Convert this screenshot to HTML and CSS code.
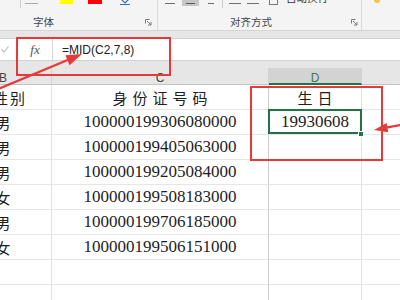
FILE: index.html
```html
<!DOCTYPE html>
<html lang="zh">
<head>
<meta charset="utf-8">
<title>MID</title>
<link rel="stylesheet" href="styles.css">
</head>
<body>
<div class="app">
  <div class="ribbon">
    <div class="group g-font">
      <div class="tools">
        <span class="vline t-a"></span>
        <span class="hline t-b"></span>
        <span class="swatch yellow"></span>
        <span class="swatch red"></span>
        <svg class="t-wen" width="10" height="6" viewBox="0 0 10 6"><path d="M1 0 L5 4 L9 0 M0 5.5 H10" stroke="#2f6fc2" stroke-width="1.2" fill="none"/></svg>
      </div>
      <div class="label-row">
        <span class="glabel l-font">字体</span>
        <svg class="launcher" width="7" height="7" viewBox="0 0 7 7"><path d="M0.5 4.5 V0.5 H4.5 M2 2 L6 6 M6 3 V6 H3" stroke="#7a7a7a" stroke-width="1" fill="none"/></svg>
      </div>
    </div>
    <div class="group g-align">
      <div class="tools">
        <span class="dash d1"></span>
        <span class="btn-on"><span class="dash in"></span></span>
        <span class="dash d2"></span>
        <span class="vline t-c"></span>
        <span class="dash d3"></span>
        <span class="dash d4"></span>
        <span class="chk"></span>
        <span class="wrap">自动换行</span>
      </div>
      <div class="label-row">
        <span class="glabel l-align">对齐方式</span>
        <svg class="launcher" width="7" height="7" viewBox="0 0 7 7"><path d="M0.5 4.5 V0.5 H4.5 M2 2 L6 6 M6 3 V6 H3" stroke="#7a7a7a" stroke-width="1" fill="none"/></svg>
      </div>
    </div>
    <div class="group g-more">
      <div class="tools"><span class="blob"></span></div>
    </div>
  </div>

  <div class="band"></div>

  <div class="fbar">
    <div class="fb-cancel">
      <svg width="8" height="7" viewBox="0 0 8 7"><path d="M0.5 3.5 L3 6 L7.5 0.5" stroke="#b9b9b9" stroke-width="1.1" fill="none"/></svg>
    </div>
    <div class="fb-fx">fx</div>
    <div class="fb-input">=MID(C2,7,8)</div>
  </div>

  <div class="sheet">
    <div class="grid">
      <div class="ch">B</div>
      <div class="ch">C</div>
      <div class="ch ch-sel">D</div>
      <div class="ch"></div>

      <div class="c cb cjk wide bhead">性别</div>
      <div class="c cc cjk wide">身份证号码</div>
      <div class="c cd cjk wide">生日</div>
      <div class="c ce"></div>

      <div class="c cb cjk">男</div>
      <div class="c cc num">100000199306080000</div>
      <div class="c cd num active">19930608</div>
      <div class="c ce"></div>

      <div class="c cb cjk">男</div>
      <div class="c cc num">100000199405063000</div>
      <div class="c cd"></div>
      <div class="c ce"></div>

      <div class="c cb cjk">男</div>
      <div class="c cc num">100000199205084000</div>
      <div class="c cd"></div>
      <div class="c ce"></div>

      <div class="c cb cjk">女</div>
      <div class="c cc num">100000199508183000</div>
      <div class="c cd"></div>
      <div class="c ce"></div>

      <div class="c cb cjk">男</div>
      <div class="c cc num">100000199706185000</div>
      <div class="c cd"></div>
      <div class="c ce"></div>

      <div class="c cb cjk">女</div>
      <div class="c cc num">100000199506151000</div>
      <div class="c cd"></div>
      <div class="c ce"></div>

      <div class="c cb"></div>
      <div class="c cc"></div>
      <div class="c cd"></div>
      <div class="c ce"></div>

      <div class="c cb"></div>
      <div class="c cc"></div>
      <div class="c cd"></div>
      <div class="c ce"></div>
    </div>
  </div>

  <div class="mark mark-formula"></div>
  <div class="mark mark-result"></div>
  <svg class="arrows" width="400" height="300" viewBox="0 0 400 300">
    <path d="M-3 89.5 L70 59" stroke="#e63a3a" stroke-width="2.2" fill="none"/>
    <polygon points="82,54 69.6,65.2 65.4,55.2" fill="#e63a3a"/>
    <path d="M386 127.6 L403 124.5" stroke="#e63a3a" stroke-width="2.2" fill="none"/>
    <polygon points="374,130 386.6,123 388.3,132.3" fill="#e63a3a"/>
  </svg>
</div>
</body>
</html>
```

FILE: styles.css
```css
html, body {
  margin: 0;
  padding: 0;
  background: #ffffff;
}

body {
  font-family: "Noto Sans CJK SC", "Noto Sans", sans-serif;
}

.app {
  position: relative;
  width: 400px;
  height: 300px;
  overflow: hidden;
  background: #ffffff;
}

/* ---------- ribbon ---------- */
.ribbon {
  display: flex;
  height: 31px;
  box-sizing: border-box;
  background: #f4f4f4;
  border-bottom: 1px solid #d6d6d6;
}

.group {
  display: flex;
  flex-direction: column;
  box-sizing: border-box;
  border-right: 1px solid #dadada;
}

.g-font { width: 158px; }
.g-align { width: 204px; }
.g-more { flex: 1; border-right: none; }

.tools {
  height: 14px;
  display: flex;
  align-items: flex-start;
}

.label-row {
  height: 16px;
  display: flex;
  align-items: center;
}

.glabel {
  font-size: 10.5px;
  line-height: 12px;
  color: #454545;
}

.l-font { margin-left: 33px; }
.l-align { margin-left: 72px; }

.launcher {
  margin-left: auto;
  margin-right: 5px;
  margin-top: 1px;
}

.g-align .launcher { margin-right: 3px; }

.vline {
  display: block;
  width: 1px;
  height: 8px;
  background: #cfcfcf;
}

.hline {
  display: block;
  height: 1px;
  background: #a9a9a9;
}

.t-a { margin-left: 20px; }
.t-b { margin-left: 4px; width: 13px; margin-top: 3px; }

.swatch {
  display: block;
  height: 4px;
}

.yellow { width: 13px; margin-left: 22px; background: #ffff00; }
.red { width: 14px; margin-left: 15px; background: #ff0000; }

.t-wen { margin-left: 18px; margin-top: -1px; }

.dash {
  display: block;
  height: 1px;
  background: #6f6f6f;
  margin-top: 3px;
}

.d1 { margin-left: 7px; width: 10px; }
.d2 { margin-left: 9px; width: 6px; }
.d3 { margin-left: 6px; width: 12px; }
.d4 { margin-left: 6px; width: 12px; }

.btn-on {
  display: flex;
  justify-content: center;
  width: 17px;
  height: 6px;
  margin-left: 7px;
  background: #c6c6c6;
}

.dash.in { width: 9px; margin-top: 3px; background: #5a5a5a; }

.t-c { margin-left: 8px; }

.chk {
  display: block;
  width: 7px;
  height: 4px;
  margin-left: 10px;
  border: 1px solid #7a7a7a;
  border-top: none;
}

.wrap {
  display: block;
  margin-left: 8px;
  margin-top: -8px;
  font-size: 10.5px;
  line-height: 12px;
  color: #333;
}

.blob {
  display: block;
  width: 6px;
  height: 6px;
  margin-left: 12px;
  margin-top: -3px;
  border-radius: 50%;
  background: #f3c246;
}

/* ---------- band & formula bar ---------- */
.band {
  height: 7px;
  background: #e6e6e6;
}

.fbar {
  display: flex;
  height: 23px;
  box-sizing: border-box;
  background: #ffffff;
  border-top: 1px solid #d2d2d2;
  border-bottom: 1px solid #d2d2d2;
}

.fb-cancel {
  width: 18px;
  box-sizing: border-box;
  border-right: 1px solid #d6d6d6;
  display: flex;
  align-items: center;
  padding-left: 1px;
}

.fb-fx {
  width: 35px;
  box-sizing: border-box;
  border-right: 1px solid #d6d6d6;
  display: flex;
  align-items: center;
  justify-content: center;
  font-family: "Liberation Serif", "DejaVu Serif", serif;
  font-style: italic;
  font-size: 13px;
  color: #555;
}

.fb-input {
  display: flex;
  align-items: center;
  padding-left: 9px;
  font-family: "Liberation Sans", sans-serif;
  font-size: 12px;
  color: #222;
}

/* ---------- sheet ---------- */
.sheet {
  background: #e6e6e6;
  padding-top: 7px;
  overflow: hidden;
}

.grid {
  display: grid;
  grid-template-columns: 97px 217px 93px 120px;
  margin-left: -45px;
  background: #ffffff;
}

.ch {
  height: 17px;
  box-sizing: border-box;
  padding-top: 4px;
  display: flex;
  align-items: center;
  justify-content: center;
  background: #e6e6e6;
  border-right: 1px solid #d2d2d2;
  border-bottom: 1px solid #c4c4c4;
  font-family: "Liberation Sans", sans-serif;
  font-size: 12px;
  color: #444;
}

.ch-sel {
  background: #d3d3d3;
  border-bottom: 2px solid #217346;
  color: #3d7a52;
}

.c {
  height: 25px;
  box-sizing: border-box;
  display: flex;
  align-items: center;
  justify-content: center;
  border-right: 1px solid #e2e2e2;
  border-bottom: 1px solid #e6e6e6;
  background: #ffffff;
  color: #1e1e1e;
  white-space: nowrap;
}

.cc { border-right-color: #cdcdcd; }

.cjk {
  font-family: "Noto Sans CJK SC", sans-serif;
  font-size: 15px;
}

.wide {
  letter-spacing: 5px;
  padding-left: 5px;
}

.bhead {
  letter-spacing: 2px;
  padding-left: 14px;
}

.num {
  font-family: "Liberation Serif", "DejaVu Serif", serif;
  font-size: 17px;
}

.active {
  position: relative;
}

.active::after {
  content: "";
  position: absolute;
  left: -1px;
  top: -1px;
  right: -1px;
  bottom: 0;
  border: 2px solid #217346;
}

.active::before {
  content: "";
  position: absolute;
  right: -3px;
  bottom: -3px;
  width: 4px;
  height: 4px;
  background: #217346;
  border: 1px solid #ffffff;
  z-index: 1;
}

/* ---------- annotations ---------- */
.mark {
  position: absolute;
  box-sizing: border-box;
  border: 2px solid #e63a3a;
}

.mark-formula {
  left: 16px;
  top: 37px;
  width: 155px;
  height: 39px;
}

.mark-result {
  left: 250px;
  top: 86px;
  width: 133px;
  height: 75px;
}

.arrows {
  position: absolute;
  left: 0;
  top: 0;
}
```
